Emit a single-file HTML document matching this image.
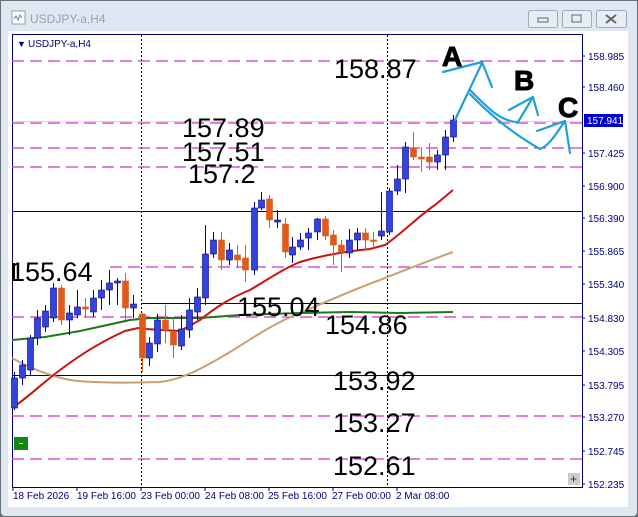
<!DOCTYPE html>
<html><head><meta charset="utf-8"><style>
html,body{margin:0;padding:0;width:638px;height:517px;overflow:hidden;background:#dfe7f0;font-family:"Liberation Sans",sans-serif}
</style></head><body>
<svg width="638" height="517" viewBox="0 0 638 517" xmlns="http://www.w3.org/2000/svg" font-family="Liberation Sans, sans-serif">
<rect x="0" y="0" width="638" height="517" fill="#6a7078"/>
<rect x="1" y="1" width="636" height="515" rx="4" fill="#dfe7f0"/>
<rect x="1" y="1" width="636" height="31" fill="#dfe8f2"/>
<rect x="12" y="11" width="13" height="13" fill="#fff" stroke="#8aa" stroke-width="1"/>
<path d="M14 19 l2 -3 2 4 2 -5 2 3" stroke="#58a" fill="none"/>
<text x="30" y="23" font-size="12" fill="#9aa3ad">USDJPY-a,H4</text>
<g fill="#e6edf4" stroke="#9eabb8">
<rect x="528.5" y="10.5" width="29" height="17" rx="2"/>
<rect x="562.5" y="10.5" width="29" height="17" rx="2"/>
<rect x="596.5" y="10.5" width="30" height="17" rx="2"/>
</g>
<rect x="538" y="18" width="10" height="4" fill="none" stroke="#666"/>
<rect x="572" y="15" width="9" height="7" fill="none" stroke="#666"/>
<path d="M606 15 l10 8 M616 15 l-10 8" stroke="#666" stroke-width="2"/>
<rect x="8" y="31" width="620" height="476" fill="#fff"/>
<path d="M12.5 34 V488 M12 34.5 H583 M582.5 34 V488 M12 487.5 H583" stroke="#000066" fill="none"/>
<text x="17" y="47" font-size="9" fill="#000080">▼</text>
<text x="28" y="47" font-size="10" fill="#000080">USDJPY-a,H4</text>
<path d="M141.5 35 V487 M387.5 35 V487" stroke="#000" stroke-dasharray="2,2"/>
<g stroke="#cc33cc" stroke-dasharray="12,6" stroke-width="1.2">
<path d="M12 61 H582 M12 123 H582 M12 148 H582 M12 167 H582 M110 267 H582 M12 317 H582 M12 416 H582 M12 459 H582"/>
</g>
<path d="M12 121.5 H582" stroke="#bbb" opacity="0.5"/>
<path d="M12 211.5 H582 M141 303.5 H582 M12 375.5 H582" stroke="#000066"/>
<path d="M12 358 C30 368,50 376,70 380 C90 383,130 383,160 382 C180 380,200 370,230 352 C250 340,270 325,300 313 C330 300,360 287,380 280 C400 272,420 264,453 252" stroke="#c9a070" stroke-width="2" fill="none"/>
<path d="M12 340 L45 337 L80 331 L130 320 L150 318 L200 318 L240 315 L300 313 L350 312 L400 313 L453 312" stroke="#1a7a1a" stroke-width="2" fill="none"/>
<path d="M12 408 C25 400,40 385,60 370 C80 355,100 342,125 331 L138 328 L145 329 L180 331 L200 320 C215 308,230 298,250 290 C270 278,285 268,300 262 C320 256,340 252,370 249 L385 245 C400 235,420 215,435 205 L453 190" stroke="#cc1111" stroke-width="2" fill="none"/>
<g id="candles" stroke-width="1"></g>
<g font-size="27" fill="#000">
<text x="334" y="78">158.87</text>
<text x="182" y="137">157.89</text>
<text x="182" y="161">157.51</text>
<text x="188" y="183">157.2</text>
<text x="10" y="281">155.64</text>
<text x="237" y="316">155.04</text>
<text x="325" y="334">154.86</text>
<text x="333" y="390">153.92</text>
<text x="333" y="432">153.27</text>
<text x="333" y="475">152.61</text>
</g>
<rect x="12" y="263" width="3" height="17" fill="#000"/>
<g stroke="#1ea0dc" stroke-width="2.2" fill="none" stroke-linecap="round" stroke-linejoin="round">
<path d="M455 120 L482 63"/>
<path d="M443 72 L482 62 L492 87"/>
<path d="M470 90 C485 105,500 122,518 122 L533 97"/>
<path d="M509 110 L533 97 L538 115"/>
<path d="M470 94 C490 115,515 135,540 149 C550 145,555 135,565 121 L570 153"/>
<path d="M537 131 L565 121"/>
</g>
<g font-size="28" font-weight="bold" fill="#000" stroke="#000" stroke-width="1">
<text x="442" y="66">A</text>
<text x="514" y="90">B</text>
<text x="558" y="117">C</text>
</g>
<g font-size="10" fill="#000080">
<text x="588" y="60">158.985</text>
<text x="588" y="91">158.460</text>
<text x="588" y="157">157.425</text>
<text x="588" y="190">156.900</text>
<text x="588" y="222">156.390</text>
<text x="588" y="255">155.865</text>
<text x="588" y="288">155.340</text>
<text x="588" y="322">154.830</text>
<text x="588" y="355">154.305</text>
<text x="588" y="389">153.795</text>
<text x="588" y="421">153.270</text>
<text x="588" y="455">152.745</text>
<text x="588" y="488">152.235</text>
</g>
<g stroke="#000080"><path d="M582 56h3M582 87h3M582 153h3M582 186h3M582 218h3M582 251h3M582 284h3M582 318h3M582 351h3M582 385h3M582 417h3M582 451h3M582 484h3"/></g>
<rect x="584" y="114" width="39" height="13" fill="#0000cc"/>
<text x="587" y="124" font-size="10" fill="#fff">157.941</text>
<g font-size="10" fill="#000080">
<text x="13" y="499">18 Feb 2026</text>
<text x="77" y="499">19 Feb 16:00</text>
<text x="141" y="499">23 Feb 00:00</text>
<text x="205" y="499">24 Feb 08:00</text>
<text x="268" y="499">25 Feb 16:00</text>
<text x="332" y="499">27 Feb 00:00</text>
<text x="396" y="499">2 Mar 08:00</text>
</g>
<path d="M13 487v4M77 487v4M141 487v4M205 487v4M269 487v4M333 487v4M397 487v4" stroke="#000080"/>
<rect x="14" y="437" width="14" height="13" fill="#118811"/>
<rect x="19" y="443" width="4" height="1" fill="#fff"/>
<rect x="568" y="473" width="12" height="12" fill="#ccc"/>
<text x="570" y="483" font-size="12" fill="#333">+</text>
</svg>
<script>
var d=[[14,'b',378,408,372,410],[22,'b',365,378,360,385],[30,'b',338,370,335,375],[37,'b',318,338,310,345],[45,'b',311,327,305,332],[53,'b',288,318,283,322],[61,'o',288,320,285,325],[69,'b',313,320,305,335],[77,'b',307,315,290,318],[85,'o',307,309,298,318],[93,'b',298,312,290,317],[101,'b',290,298,280,310],[109,'b',283,290,270,305],[117,'b',281,283,278,305],[125,'o',281,308,273,320],[133,'b',304,308,295,318],[142,'o',314,358,313,372],[149,'b',343,358,337,366],[157,'b',320,344,314,352],[165,'o',320,330,305,343],[173,'o',332,345,318,358],[181,'b',329,346,315,350],[189,'b',310,330,298,338],[197,'b',297,312,288,320],[205,'b',254,298,225,305],[213,'b',240,254,232,258],[221,'o',240,260,232,270],[229,'b',250,260,243,265],[237,'o',255,260,245,268],[245,'o',258,270,245,282],[254,'b',208,270,202,275],[261,'b',200,208,192,210],[269,'o',199,220,195,228],[277,'b',220,222,210,228],[285,'o',224,252,218,258],[292,'b',247,255,237,263],[300,'b',240,247,233,250],[308,'b',233,238,228,250],[317,'b',219,232,218,240],[325,'o',219,236,216,240],[333,'o',235,245,230,265],[341,'o',245,252,240,272],[349,'b',240,253,229,258],[357,'b',233,240,228,250],[365,'o',233,240,228,250],[373,'o',240,241,232,248],[381,'b',231,236,192,240],[389,'b',191,232,188,235],[397,'b',179,191,165,195],[405,'b',147,179,142,193],[413,'o',148,157,132,160],[421,'o',157,159,147,172],[429,'o',157,162,143,170],[437,'b',155,162,150,170],[445,'b',137,155,130,170],[453,'b',120,137,115,142]];
var g=document.getElementById('candles'),s='';
d.forEach(function(c){var col=c[1]=='b'?'#3344dd':'#e05a1a',st=c[1]=='b'?'#000088':'#e05a1a';
s+='<line x1="'+(c[0]+.5)+'" x2="'+(c[0]+.5)+'" y1="'+c[4]+'" y2="'+c[5]+'" stroke="'+st+'"/>';
s+='<rect x="'+(c[0]-2.5)+'" y="'+c[2]+'" width="6" height="'+Math.max(1.5,c[3]-c[2])+'" fill="'+col+'" stroke="'+st+'" stroke-width="0.6"/>';});
g.innerHTML=s;
</script>
</body></html>
